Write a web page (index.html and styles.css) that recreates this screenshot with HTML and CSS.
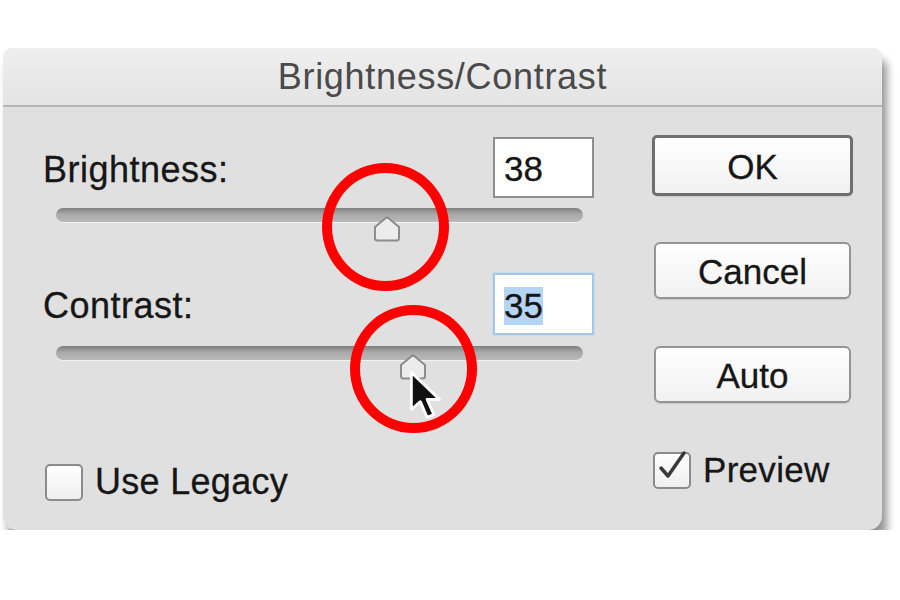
FILE: index.html
```html
<!DOCTYPE html>
<html lang="en">
<head>
    <meta charset="UTF-8">
    <title>Brightness/Contrast</title>
    <link rel="stylesheet" href="styles.css">
</head>
<body>
    <div class="dialog">
        <div class="titlebar">Brightness/Contrast</div>

        <div class="content">
            <div class="controls">
                <div class="field-row">
                    <label for="brightness">Brightness:</label>
                    <div class="num-input" id="brightness">38</div>
                </div>
                <div class="slider">
                    <svg class="thumb" style="left: 62.8%;" width="30" height="26" viewBox="0 0 30 26">
                        <path d="M3 11 L13.5 2.2 Q15 1 16.5 2.2 L27 11 V22 Q27 24.5 24.5 24.5 H5.5 Q3 24.5 3 22 Z" fill="#ececec" stroke="#8c8c8c" stroke-width="2"/>
                    </svg>
                </div>

                <div class="field-row second">
                    <label for="contrast">Contrast:</label>
                    <div class="num-input focused" id="contrast"><span class="selected">35</span></div>
                </div>
                <div class="slider slider-low">
                    <svg class="thumb" style="left: 67.7%;" width="30" height="26" viewBox="0 0 30 26">
                        <path d="M3 11 L13.5 2.2 Q15 1 16.5 2.2 L27 11 V22 Q27 24.5 24.5 24.5 H5.5 Q3 24.5 3 22 Z" fill="#ececec" stroke="#8c8c8c" stroke-width="2"/>
                    </svg>
                </div>

                <div class="check-row legacy">
                    <span class="checkbox"></span>
                    <span>Use Legacy</span>
                </div>
            </div>

            <div class="buttons">
                <button class="btn default">OK</button>
                <button class="btn cancel">Cancel</button>
                <button class="btn auto">Auto</button>
                <div class="check-row preview">
                    <span class="checkbox">
                        <svg width="44" height="40" viewBox="0 0 44 40">
                            <path d="M10 20 L17 28 L33 5" fill="none" stroke="#3a3a3a" stroke-width="3.5" stroke-linecap="round" stroke-linejoin="round"/>
                        </svg>
                    </span>
                    <span>Preview</span>
                </div>
            </div>
        </div>

        <!-- annotation rings + pointer -->
        <div class="ring ring-one"></div>
        <div class="ring ring-two"></div>
        <svg class="pointer" width="36" height="52" viewBox="0 0 32 46">
            <path d="M3 2 L3 35 L11 28 L17 42 L23 39.5 L17 26 L28 26 Z" fill="#111" stroke="#fff" stroke-width="2.5" stroke-linejoin="round"/>
        </svg>
    </div>
</body>
</html>
```

FILE: styles.css
```css
body {
    margin: 0;
    background: #ffffff;
    font-family: 'Liberation Sans', Arial, sans-serif;
    color: #161616;
}

.dialog {
    position: relative;
    width: 879px;
    height: 482px;
    margin: 48px 0 0 3px;
    background: #e0e0e0;
    border-radius: 9px 9px 14px 14px;
    box-shadow: 5px 11px 9px rgba(0, 0, 0, 0.42);
}

.titlebar {
    height: 57px;
    display: flex;
    align-items: center;
    justify-content: center;
    font-size: 36px;
    letter-spacing: 0.7px;
    color: #4a4a4a;
    background: linear-gradient(#efefef, #e4e4e4);
    border-bottom: 2px solid #b6b6b6;
    border-radius: 9px 9px 0 0;
}

.content {
    display: flex;
    gap: 58px;
    padding: 30px 29px 0 40px;
    -webkit-text-stroke: 0.3px currentColor;
}

.controls {
    width: 551px;
    display: flex;
    flex-direction: column;
}

.field-row {
    display: flex;
    align-items: center;
    justify-content: space-between;
    height: 61px;
    font-size: 36px;
}

.field-row label {
    padding-top: 4px;
    letter-spacing: 0.5px;
}

.field-row.second {
    margin-top: 51px;
    height: 62px;
}

.num-input {
    box-sizing: border-box;
    width: 101px;
    height: 100%;
    padding: 3px 0 0 9px;
    display: flex;
    align-items: center;
    background: #ffffff;
    border: 2px solid #8e8e8e;
    font-size: 35px;
    color: #151515;
}

.num-input.focused {
    border-color: #a5c6e8;
    box-shadow: 0 0 0 1px #c9dcf0;
}

.selected {
    background: #b5d5f7;
    line-height: 38px;
}

.slider {
    position: relative;
    width: 527px;
    height: 14px;
    margin: 10px 0 0 13px;
    border-radius: 7px;
    background: linear-gradient(#7f7f7f, #a9a9a9 45%, #b9b9b9);
    box-shadow: 0 1px 0 rgba(255, 255, 255, 0.6);
}

.slider-low {
    margin-top: 11px;
}

.thumb {
    position: absolute;
    top: 8px;
    transform: translateX(-50%);
}

.check-row {
    display: flex;
    align-items: center;
    gap: 12px;
    font-size: 36px;
    letter-spacing: 0.3px;
}

.check-row.legacy {
    margin: 101px 0 0 2px;
}

.checkbox {
    position: relative;
    box-sizing: border-box;
    width: 38px;
    height: 37px;
    flex: none;
    background: linear-gradient(#ffffff, #efefef);
    border: 2px solid #8b8b8b;
    border-radius: 5px;
}

.checkbox svg {
    position: absolute;
    left: -4px;
    top: -6px;
}

.buttons {
    width: 201px;
    display: flex;
    flex-direction: column;
}

.btn {
    box-sizing: border-box;
    width: 197px;
    height: 57px;
    margin-left: 2px;
    padding: 3px 0 0;
    font-family: inherit;
    font-size: 35px;
    color: #161616;
    -webkit-text-stroke: 0.3px currentColor;
    background: linear-gradient(#ffffff, #f1f1f1);
    border: 2px solid #949494;
    border-radius: 6px;
    box-shadow: 0 1px 1px rgba(0, 0, 0, 0.1);
}

.btn.default {
    width: 201px;
    height: 61px;
    margin: -2px 0 0;
    border: 3px solid #6f6f6f;
    border-radius: 5px;
}

.btn.cancel {
    margin-top: 46px;
}

.btn.auto {
    margin-top: 47px;
}

.check-row.preview {
    margin: 47px 0 0 1px;
    gap: 12px;
    font-size: 35px;
}

/* annotation overlay */
.ring {
    position: absolute;
    box-sizing: border-box;
    width: 127px;
    height: 128px;
    border: 10px solid #fe0000;
    border-radius: 50%;
}

.ring-one {
    left: 319px;
    top: 115px;
}

.ring-two {
    left: 347px;
    top: 257px;
}

.pointer {
    position: absolute;
    left: 405px;
    top: 322px;
}
```
